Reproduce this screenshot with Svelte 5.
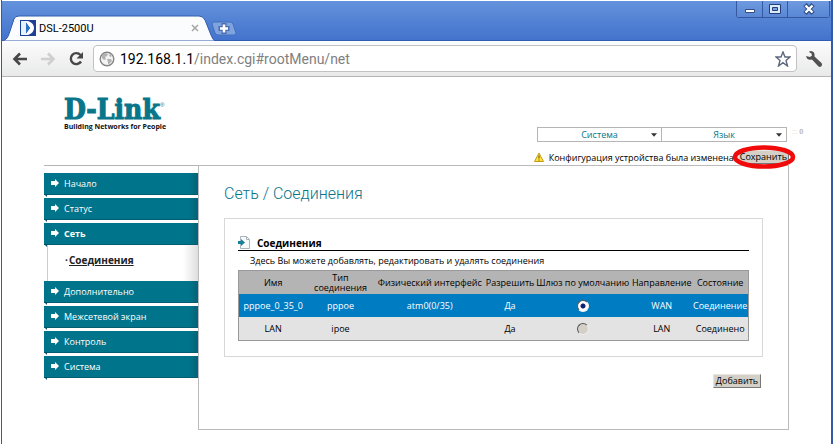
<script>
	let gateway = $state('pppoe_0_35_0');
	let address = $state('192.168.1.1/index.cgi#rootMenu/net');

	const menu = [
		{ title: 'Начало' },
		{ title: 'Статус' },
		{ title: 'Сеть', active: true, items: ['Соединения'] },
		{ title: 'Дополнительно' },
		{ title: 'Межсетевой экран' },
		{ title: 'Контроль' },
		{ title: 'Система' }
	];

	const columns = [
		{ title: 'Имя', width: 13.5 },
		{ title: 'Тип соединения', width: 13 },
		{ title: 'Физический интерфейс', width: 22 },
		{ title: 'Разрешить', width: 9.5 },
		{ title: 'Шлюз по умолчанию', width: 19 },
		{ title: 'Направление', width: 12 },
		{ title: 'Состояние', width: 11 }
	];

	const connections = [
		{ name: 'pppoe_0_35_0', type: 'pppoe', iface: 'atm0(0/35)', enabled: 'Да', direction: 'WAN', status: 'Соединение' },
		{ name: 'LAN', type: 'ipoe', iface: '', enabled: 'Да', direction: 'LAN', status: 'Соединено', locked: true }
	];
</script>

<div class="window">
	<header class="titlebar">
		<div class="tab">
			<svg class="tab-shape" viewBox="0 0 212 26" preserveAspectRatio="none" aria-hidden="true">
				<path d="M0 26C5 25 6 22 8 16L12 4Q13 1 17 1H197Q201 1 203 5L209 20Q211 26 214 26Z" fill="#fbfcfd" stroke="#315cae" />
			</svg>
			<svg class="favicon" viewBox="0 0 16 16" aria-hidden="true">
				<path d="M0 0H16V16H0Z" fill="#1d3f96" />
				<path d="M1 1H6V15H1Z" fill="#e6f3ff" />
				<path d="M5 1H8Q14 3 14 8T8 15H5L10 8Z" fill="#fff" />
				<path d="M6 3L10 8L6 13Z" fill="#2b73c9" />
			</svg>
			<span class="tab-title">DSL-2500U</span>
			<button class="tab-close" aria-label="Закрыть вкладку">
				<svg viewBox="0 0 8 8"><path d="M1 1L7 7M7 1L1 7" stroke="#a5a5a5" stroke-width="1.5" /></svg>
			</button>
		</div>
		<button class="new-tab" aria-label="Новая вкладка">
			<svg viewBox="0 0 26 15">
				<path d="M3 1H19Q21 1 22 3L25 12Q25 14 23 14H7Q5 14 4 12L1 3Q1 1 3 1Z" fill="#7ea3df" stroke="#426fbd" />
				<path d="M13 2V13M7.500 7.500H18.500" stroke="#4a6eae" stroke-width="5" />
				<path d="M13 3.500V11.500M9 7.500H17" stroke="#fff" stroke-width="2.600" />
			</svg>
		</button>
		<div class="controls">
			<button class="control" aria-label="Свернуть">
				<svg viewBox="0 0 14 12"><path d="M2.500 6.500H11.500V9.500H2.500Z" fill="#fff" stroke="#304f86" /></svg>
			</button>
			<button class="control" aria-label="Развернуть">
				<svg viewBox="0 0 14 12">
					<path d="M1.500 1.500H12.500V10.500H1.500Z" fill="#dce9fb" stroke="#233f77" />
					<path d="M4.500 4.500H9.500V7.500H4.500Z" fill="#7ba1dd" stroke="#233f77" />
				</svg>
			</button>
			<button class="control close" aria-label="Закрыть">
				<svg viewBox="0 0 14 12">
					<path d="M3 1.500L11 10.500M11 1.500L3 10.500" stroke="#304f86" stroke-width="4.500" />
					<path d="M3.500 2.500L10.500 9.500M10.500 2.500L3.500 9.500" stroke="#fff" stroke-width="2.400" />
				</svg>
			</button>
		</div>
	</header>

	<div class="toolbar">
		<button class="nav" aria-label="Назад">
			<svg viewBox="0 0 16 16"><path d="M15 8H3M8 2.500L2.500 8L8 13.500" fill="none" stroke="#474747" stroke-width="2.600" /></svg>
		</button>
		<button class="nav" aria-label="Вперёд">
			<svg viewBox="0 0 16 16"><path d="M1 8H13M8 2.500L13.500 8L8 13.500" fill="none" stroke="#cfcfcf" stroke-width="2.600" /></svg>
		</button>
		<button class="nav" aria-label="Обновить">
			<svg viewBox="0 0 16 16">
				<path d="M12.500 4A5.500 5.500 0 1 0 13 10.500" fill="none" stroke="#474747" stroke-width="2.400" />
				<path d="M15 1V7.500H8.500Z" fill="#474747" />
			</svg>
		</button>
		<div class="omnibox">
			<svg class="globe" viewBox="0 0 16 16" aria-hidden="true">
				<circle cx="8" cy="8" r="6.800" fill="#f3f3f3" stroke="#858585" stroke-width="1.400" />
				<path d="M3 4L6 2L9 3L8 5L6 6L7 8L5 9L3 7ZM8 8L12 8L13 10L10 13L9 13L9 11ZM11 3L13 5L11 6L10 4Z" fill="#b2b2b2" />
			</svg>
			<div class="address">
				<span aria-hidden="true">{address.split('/')[0]}<i>{address.slice(address.indexOf('/'))}</i></span>
				<input aria-label="Адрес" bind:value={address} />
			</div>
			<button class="star" aria-label="В закладки">
				<svg viewBox="0 0 16 16">
					<path d="M8 1L10 6H15L11 9.500L12.500 15L8 11.700L3.500 15L5 9.500L1 6H6Z" fill="#fff" stroke="#5d687c" stroke-width="1.400" />
				</svg>
			</button>
		</div>
		<button class="wrench" aria-label="Настройки">
			<svg viewBox="0 0 16 16">
				<path d="M4 0Q8 0 8.500 3L8.500 5.500L15.500 12Q17 14 15 15.500Q13.500 16.500 12 15L6 8.500Q3 9.500 1 7.500L0 5L4 6L6 4.500L5.500 2.500L3 1Z" fill="#515151" />
			</svg>
		</button>
	</div>

	<main class="page">
		<div class="top">
			<a class="logo" href="#rootMenu" aria-label="D-Link">
				<strong>D-Link<sup>®</sup></strong>
				<span>Building Networks for People</span>
			</a>
			<div class="tools">
				<div class="selects">
					<label>
						<select aria-label="Система"><option>Система</option></select>
						<svg viewBox="0 0 7 4" aria-hidden="true"><path d="M0 0H7L3.500 4Z" fill="#333" /></svg>
					</label>
					<label>
						<select aria-label="Язык"><option>Язык</option></select>
						<svg viewBox="0 0 7 4" aria-hidden="true"><path d="M0 0H7L3.500 4Z" fill="#333" /></svg>
					</label>
					<span class="counter">::: <b>0</b></span>
				</div>
				<div class="notice">
					<svg viewBox="0 0 10 10" aria-hidden="true">
						<path d="M5 1L9.500 9.500H0.500Z" fill="#ffe43b" stroke="#c39b19" />
						<path d="M5 3.500V6.500M5 7.500V8.500" stroke="#54420a" />
					</svg>
					<span>Конфигурация устройства была изменена</span>
					<div class="save">
						<button class="classic">Сохранить</button>
						<svg viewBox="0 0 64 24" preserveAspectRatio="none" aria-hidden="true">
							<ellipse cx="32" cy="12" rx="29" ry="9.500" fill="none" stroke="#f00a0a" stroke-width="4.600" />
						</svg>
					</div>
				</div>
			</div>
		</div>

		<div class="body">
			<nav class="sidebar">
				{#each menu as item}
					<a class="item" class:active={item.active} href="#rootMenu">
						<svg viewBox="0 0 8 8" aria-hidden="true"><path d="M0 2H4V0L8 4L4 8V6H0Z" fill="#fff" /></svg>
						{item.title}
					</a>
					{#if item.items}
						<div class="submenu">
							{#each item.items as sub}
								<a href="#rootMenu/net">{sub}</a>
							{/each}
						</div>
					{/if}
				{/each}
			</nav>

			<section class="content">
				<h1>Сеть / Соединения</h1>
				<div class="box">
					<h2>
						<svg viewBox="0 0 12 13" aria-hidden="true">
							<path d="M2.500 0.500H8.500L11.500 3.500V12.500H2.500Z" fill="#f7f9fb" stroke="#a9b5bf" />
							<path d="M8.500 0.500V3.500H11.500" fill="none" stroke="#a9b5bf" />
							<path d="M0 5H3V3L7 6.500L3 10V8H0Z" fill="#187f9c" />
						</svg>
						Соединения
					</h2>
					<p>Здесь Вы можете добавлять, редактировать и удалять соединения</p>
					<table>
						<colgroup>
							{#each columns as column}
								<col style="width: {column.width}%" />
							{/each}
						</colgroup>
						<thead>
							<tr>
								{#each columns as column}
									<th>{column.title}</th>
								{/each}
							</tr>
						</thead>
						<tbody>
							{#each connections as row}
								<tr class:selected={gateway === row.name}>
									<td>{row.name}</td>
									<td>{row.type}</td>
									<td>{row.iface}</td>
									<td>{row.enabled}</td>
									<td>
										<input
											type="radio"
											name="gateway"
											aria-label="Шлюз по умолчанию: {row.name}"
											value={row.name}
											bind:group={gateway}
											disabled={row.locked}
										/>
									</td>
									<td>{row.direction}</td>
									<td>{row.status}</td>
								</tr>
							{/each}
						</tbody>
					</table>
				</div>
				<div class="actions">
					<button class="classic">Добавить</button>
				</div>
			</section>
		</div>
	</main>
</div>

<style>
	:global(body) {
		margin: 0;
		background: #fff;
	}

	.window {
		box-sizing: border-box;
		min-height: 100vh;
		padding-top: 1px;
		border: solid #3459a6;
		border-width: 0 2px 0 1px;
		margin-left: 1px;
		font-family: 'Open Sans', Tahoma, sans-serif;
		font-size: 9px;
		color: #000;
	}

	button {
		padding: 0;
		border: 0;
		background: none;
		font: inherit;
		color: inherit;
	}

	svg {
		display: block;
	}

	.titlebar {
		display: flex;
		align-items: flex-end;
		height: 40px;
		background: linear-gradient(#6492dc, #4272cc);
		box-shadow: inset 0 -1px #2f5db2;
	}

	.tab {
		position: relative;
		display: flex;
		align-items: center;
		box-sizing: border-box;
		width: 212px;
		height: 26px;
		padding: 0 15px 0 18px;
	}

	.tab-shape {
		position: absolute;
		inset: 0;
		width: 100%;
		height: 100%;
	}

	.favicon {
		position: relative;
		width: 16px;
		height: 16px;
	}

	.tab-title {
		position: relative;
		flex: 1;
		padding-left: 3px;
		font-family: Roboto, Tahoma, sans-serif;
		font-size: 11px;
	}

	.tab-close {
		position: relative;
		width: 8px;
		height: 8px;
	}

	.new-tab {
		align-self: flex-start;
		width: 26px;
		height: 15px;
		margin-top: 20px;
		margin-left: -3px;
	}

	.controls {
		display: flex;
		align-self: flex-start;
		margin: 0 1px 0 auto;
		border: 1px solid #34599f;
		border-top: 0;
		border-radius: 0 0 3px 3px;
	}

	.control {
		display: flex;
		align-items: center;
		justify-content: center;
		width: 25px;
		height: 16px;
		background: linear-gradient(#6f9adf, #5a87d5);
	}

	.control + .control {
		border-left: 1px solid #34599f;
	}

	.control svg {
		width: 14px;
		height: 12px;
	}

	.close {
		width: 42px;
	}

	.toolbar {
		display: flex;
		align-items: center;
		box-sizing: border-box;
		height: 36px;
		padding: 0 9px 0 10px;
		border-bottom: 1px solid #b6b6b6;
		background: linear-gradient(#fbfcfd, #e9e9e9);
	}

	.nav {
		width: 16px;
		height: 16px;
		margin-right: 12px;
	}

	.nav:nth-child(3) {
		margin-right: 9px;
	}

	.nav svg,
	.wrench svg,
	.star svg {
		width: 16px;
		height: 16px;
	}

	.omnibox {
		display: flex;
		flex: 1;
		align-items: center;
		box-sizing: border-box;
		height: 27px;
		padding: 0 5px;
		border: 1px solid #c2c2c2;
		border-radius: 4px;
		background: #fff;
	}

	.globe {
		width: 16px;
		height: 16px;
	}

	.address {
		position: relative;
		flex: 1;
		margin-left: 5px;
		font-family: Roboto, Tahoma, sans-serif;
		font-size: 14px;
		line-height: 20px;
		white-space: pre;
	}

	.address i {
		font-style: normal;
		color: #808080;
	}

	.address input {
		position: absolute;
		inset: 0;
		width: 100%;
		padding: 0;
		border: 0;
		outline: 0;
		background: none;
		font: inherit;
		color: transparent;
		caret-color: #000;
	}

	.wrench {
		width: 16px;
		height: 16px;
		margin-left: 9px;
	}

	.page {
		padding: 22px 42px 14px;
	}

	.top {
		display: flex;
		justify-content: space-between;
		height: 66px;
	}

	.logo {
		display: flex;
		flex-direction: column;
		margin-left: 20px;
		color: #111;
		text-decoration: none;
		white-space: nowrap;
	}

	.logo strong {
		font: bold 28px/22px 'DejaVu Serif Condensed', 'DejaVu Serif', serif;
		color: #08758a;
		-webkit-text-stroke: 1px #08758a;
	}

	.logo sup {
		font: 6px/6px 'Liberation Sans', sans-serif;
		vertical-align: 12px;
		-webkit-text-stroke: 0;
	}

	.logo span {
		font: bold 7px/12px 'Open Sans', sans-serif;
	}

	.tools {
		display: flex;
		flex-direction: column;
		align-items: flex-end;
		padding-top: 28px;
	}

	.selects {
		position: relative;
		display: flex;
		margin-right: 2px;
	}

	.selects label {
		position: relative;
		box-sizing: border-box;
		width: 125px;
		height: 15px;
		border: 1px solid #b5b5b5;
	}

	.selects label + label {
		border-left: 0;
	}

	.selects select {
		display: block;
		width: 100%;
		height: 13px;
		padding: 0;
		border: 0;
		appearance: none;
		background: #fff;
		font: inherit;
		color: #08758a;
		text-align: center;
		text-align-last: center;
	}

	.selects label svg {
		position: absolute;
		top: 5px;
		right: 4px;
		width: 6px;
		height: 4px;
		pointer-events: none;
	}

	.counter {
		position: absolute;
		left: 100%;
		margin-left: 5px;
		font-size: 7px;
		color: #ddd;
		white-space: nowrap;
	}

	.counter b {
		color: #bbb;
	}

	.notice {
		display: flex;
		align-items: center;
		margin-top: 8px;
		white-space: nowrap;
	}

	.notice > svg {
		width: 10px;
		height: 10px;
		margin-right: 5px;
	}

	.save {
		position: relative;
		margin-left: 4px;
	}

	.save svg {
		position: absolute;
		top: -5px;
		left: -6px;
		width: 64px;
		height: 24px;
		pointer-events: none;
	}

	.classic {
		display: block;
		min-width: 48px;
		height: 14px;
		padding: 0 1px;
		border: 1px solid;
		border-color: #e8e6e0 #777 #777 #e8e6e0;
		background: #d4d0c8;
		line-height: 12px;
	}

	.body {
		display: flex;
	}

	.sidebar {
		box-sizing: border-box;
		width: 154px;
		padding-top: 7px;
		border-top: 1px solid #b5b5b5;
	}

	.item {
		position: relative;
		display: flex;
		align-items: center;
		box-sizing: border-box;
		height: 22px;
		margin-bottom: 3px;
		padding: 0 7px 1px;
		border-bottom: 1px solid #035c70;
		background: linear-gradient(90deg, #00748a 94%, #046377);
		color: #fff;
		text-decoration: none;
	}

	/* folded corner under each item */
	.item::after {
		content: '';
		position: absolute;
		top: 100%;
		left: 0;
		border-top: 3px solid #034e60;
		border-left: 3px solid transparent;
	}

	.item svg {
		width: 8px;
		height: 8px;
		margin-right: 5px;
	}

	.active {
		margin-bottom: 0;
		font-weight: bold;
	}

	.submenu {
		box-sizing: border-box;
		height: 36px;
		margin-left: 3px;
		padding: 8px 0 0 17px;
		border-left: 1px solid #ccc;
		background: linear-gradient(90deg, #fff 90%, #dedede);
		font-size: 10px;
		line-height: 14px;
	}

	.submenu a {
		font-weight: bold;
		color: #222;
	}

	.submenu a::before {
		content: '·';
		display: inline-block;
		width: 4px;
	}

	.content {
		flex: 1;
		box-sizing: border-box;
		min-width: 0;
		height: 265px;
		padding: 17px 25px;
		border: 1px solid #bbb;
	}

	h1 {
		margin: 0;
		font-family: Roboto, Tahoma, sans-serif;
		font-size: 16px;
		font-weight: 300;
		line-height: 22px;
		color: #08758a;
	}

	.box {
		margin-top: 13px;
		padding: 16px 13px 15px;
		border: 1px solid #d8d8d8;
	}

	h2 {
		display: flex;
		align-items: center;
		height: 15px;
		margin: 0;
		border-bottom: 1px solid #000;
		font-size: 10px;
	}

	h2 svg {
		width: 12px;
		height: 13px;
		margin-right: 7px;
	}

	p {
		margin: 0;
		padding: 3px 12px 2px;
		line-height: 14px;
	}

	table {
		width: 100%;
		border: 1px solid #999;
		border-collapse: collapse;
		table-layout: fixed;
		text-align: center;
	}

	th,
	td {
		height: 23px;
		padding: 0;
		font-weight: normal;
		line-height: 10px;
	}

	th {
		background: #b4b4b4;
		white-space: nowrap;
	}

	th:nth-child(2) {
		padding: 0 5px;
		white-space: normal;
	}

	td {
		background: #e3e3e3;
		white-space: nowrap;
	}

	.selected td {
		background: #007cc3;
		color: #fff;
	}

	td input {
		display: block;
		width: 12px;
		height: 12px;
		margin: 0 auto;
		border: 1px solid;
		border-color: #555 #eee #eee #555;
		border-radius: 50%;
		appearance: none;
		background: #fff;
	}

	td input:checked {
		background: radial-gradient(circle, #102070 2px, #fff 3px);
	}

	td input:disabled {
		background: #d4d0c8;
	}

	.actions {
		display: flex;
		justify-content: flex-end;
		margin-top: 17px;
		padding-right: 2px;
	}
</style>
